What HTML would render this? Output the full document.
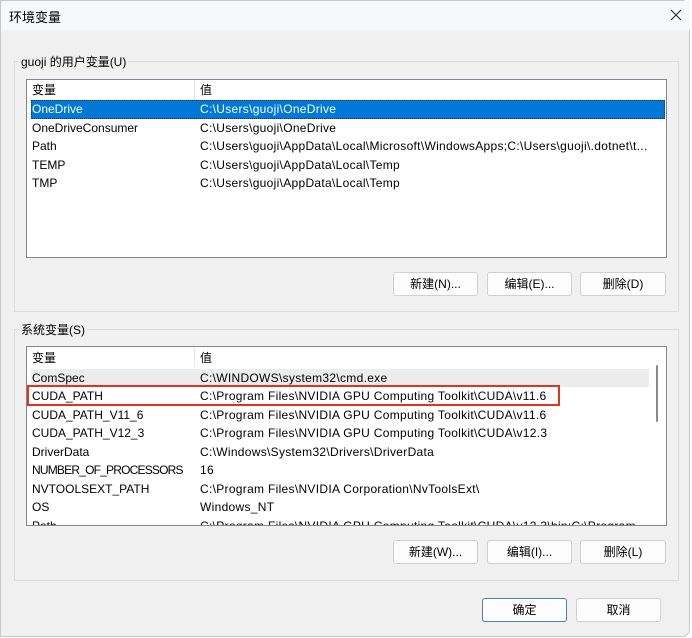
<!DOCTYPE html>
<html><head><meta charset="utf-8"><style>
*{box-sizing:border-box;margin:0;padding:0}
body{width:692px;height:638px;background:#fff;font-family:"Liberation Sans","Noto Sans CJK SC",sans-serif;font-size:12px;color:#000;position:relative;overflow:hidden}
.win{position:absolute;left:0;top:0;width:690px;height:637px;background:#f0f0f0;border:1px solid #c8c8c8;border-radius:0 8px 8px 0}
.title{position:absolute;left:0;top:0;width:689px;height:29px;background:#f6f8fb}
.abs{position:absolute;white-space:nowrap}
.grp{position:absolute;border:1px solid #dcdcdc;background:#f1f1f1}
.lbl{position:absolute;background:#f0f0f0;padding:0 2px;font-size:12px}
.list{position:absolute;background:#fff;border:1px solid #828790;overflow:hidden}
.row{position:absolute;left:4px;height:18px;line-height:18px;white-space:nowrap}
.row span{position:absolute}
.row span+span{letter-spacing:0.3px}
.btn{position:absolute;height:24px;background:#fdfdfd;border:1px solid #d0d0d0;border-radius:3px;text-align:center;line-height:22px;font-size:12px}
</style></head><body>
<div class="win">
<div class="title"></div>
<div class="abs" style="left:8px;top:6px;font-size:13px">环境变量</div>
<svg class="abs" style="left:669px;top:8px" width="12" height="12"><path d="M1 1L11 11M11 1L1 11" stroke="#333" stroke-width="1.2"/></svg>

<div class="grp" style="left:13px;top:60px;width:665px;height:251px"></div>
<div class="lbl" style="left:18px;top:52px">guoji 的用户变量(U)</div>
<div class="list" style="left:25px;top:78px;width:641px;height:179px">
 <div class="abs" style="left:167px;top:0;width:1px;height:20px;background:#e5e5e5"></div>
 <div class="row" style="top:1px"><span style="left:1px">变量</span><span style="left:169px">值</span></div>
 <div class="abs" style="left:4px;top:20px;width:634px;height:19px;background:#0078d7;border:1px dotted #333"></div>
 <div class="row" style="top:20px;color:#fff"><span style="left:1px">OneDrive</span><span style="left:169px">C:\Users\guoji\OneDrive</span></div>
 <div class="row" style="top:39px"><span style="left:1px">OneDriveConsumer</span><span style="left:169px">C:\Users\guoji\OneDrive</span></div>
 <div class="row" style="top:57px"><span style="left:1px">Path</span><span style="left:169px">C:\Users\guoji\AppData\Local\Microsoft\WindowsApps;C:\Users\guoji\.dotnet\t...</span></div>
 <div class="row" style="top:76px"><span style="left:1px">TEMP</span><span style="left:169px">C:\Users\guoji\AppData\Local\Temp</span></div>
 <div class="row" style="top:94px"><span style="left:1px">TMP</span><span style="left:169px">C:\Users\guoji\AppData\Local\Temp</span></div>
</div>
<div class="btn" style="left:392px;top:271px;width:85px">新建(N)...</div>
<div class="btn" style="left:486px;top:271px;width:85px">编辑(E)...</div>
<div class="btn" style="left:579px;top:271px;width:86px">删除(D)</div>

<div class="grp" style="left:13px;top:328px;width:665px;height:252px"></div>
<div class="lbl" style="left:18px;top:320px">系统变量(S)</div>
<div class="list" style="left:25px;top:345px;width:641px;height:180px">
 <div class="abs" style="left:167px;top:0;width:1px;height:20px;background:#e5e5e5"></div>
 <div class="abs" style="left:4px;top:22px;width:618px;height:18px;background:#ececec"></div>
 <div class="abs" style="left:629px;top:18px;width:2px;height:57px;background:#8a8a8a;border-radius:1px"></div>
 <div class="row" style="top:2px"><span style="left:1px">变量</span><span style="left:169px">值</span></div>
 <div class="row" style="top:22px"><span style="left:1px">ComSpec</span><span style="left:169px">C:\WINDOWS\system32\cmd.exe</span></div>
 <div class="row" style="top:40px"><span style="left:1px">CUDA_PATH</span><span style="left:169px">C:\Program Files\NVIDIA GPU Computing Toolkit\CUDA\v11.6</span></div>
 <div class="row" style="top:59px"><span style="left:1px">CUDA_PATH_V11_6</span><span style="left:169px">C:\Program Files\NVIDIA GPU Computing Toolkit\CUDA\v11.6</span></div>
 <div class="row" style="top:77px"><span style="left:1px">CUDA_PATH_V12_3</span><span style="left:169px">C:\Program Files\NVIDIA GPU Computing Toolkit\CUDA\v12.3</span></div>
 <div class="row" style="top:96px"><span style="left:1px">DriverData</span><span style="left:169px">C:\Windows\System32\Drivers\DriverData</span></div>
 <div class="row" style="top:114px"><span style="left:1px;letter-spacing:-0.8px">NUMBER_OF_PROCESSORS</span><span style="left:169px">16</span></div>
 <div class="row" style="top:133px"><span style="left:1px">NVTOOLSEXT_PATH</span><span style="left:169px">C:\Program Files\NVIDIA Corporation\NvToolsExt\</span></div>
 <div class="row" style="top:151px"><span style="left:1px">OS</span><span style="left:169px">Windows_NT</span></div>
 <div class="row" style="top:170px"><span style="left:1px">Path</span><span style="left:169px">C:\Program Files\NVIDIA GPU Computing Toolkit\CUDA\v12.3\bin;C:\Program...</span></div>
</div>
<div class="abs" style="left:26px;top:384px;width:533px;height:21px;border:2px solid #e0341c"></div>
<div class="btn" style="left:392px;top:539px;width:85px">新建(W)...</div>
<div class="btn" style="left:486px;top:539px;width:85px">编辑(I)...</div>
<div class="btn" style="left:579px;top:539px;width:86px">删除(L)</div>

<div class="btn" style="left:481px;top:597px;width:85px;border:1px solid #4a7fb5">确定</div>
<div class="btn" style="left:575px;top:597px;width:85px">取消</div>
</div>
</body></html>
